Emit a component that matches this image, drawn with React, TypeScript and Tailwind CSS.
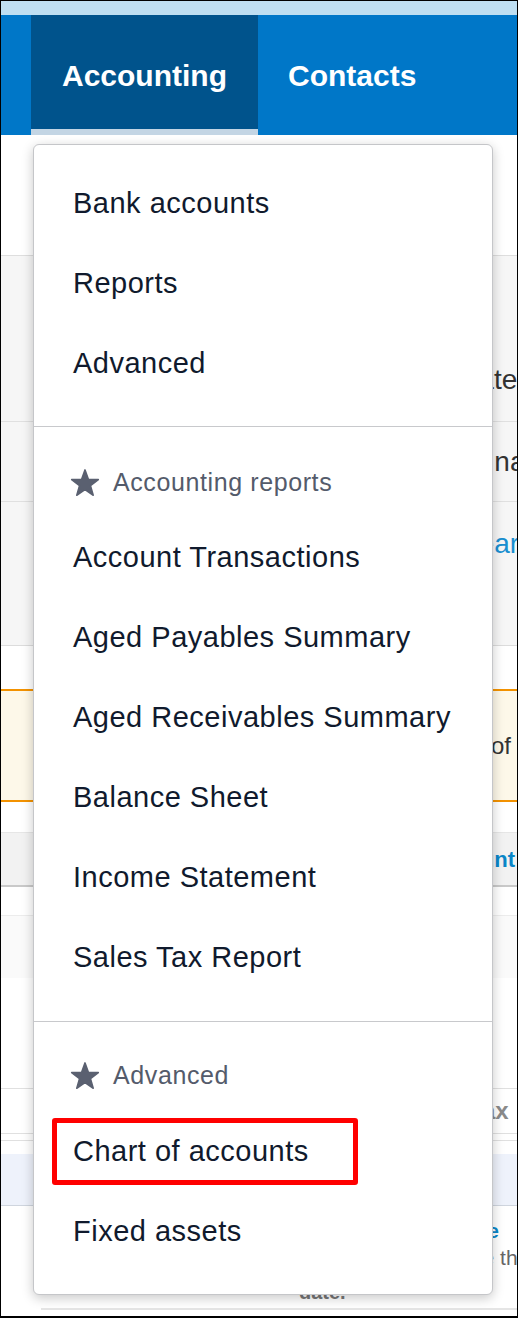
import React from "react";

const font = { fontFamily: '"Liberation Sans", Arial, Helvetica, sans-serif' };

const quickLinks = ["Bank accounts", "Reports", "Advanced"];
const accountingReports = [
  "Account Transactions",
  "Aged Payables Summary",
  "Aged Receivables Summary",
  "Balance Sheet",
  "Income Statement",
  "Sales Tax Report",
];

function Star() {
  return (
    <svg width="30" height="29" viewBox="-1 -1 32 31" className="shrink-0">
      <path
        d="M15 1 L18.64 10.98 L29.27 11.36 L20.9 17.92 L23.82 28.14 L15 22.2 L6.18 28.14 L9.1 17.92 L0.73 11.36 L11.36 10.98 Z"
        fill="#5a6070"
        stroke="#5a6070"
        strokeWidth="1.6"
        strokeLinejoin="round"
      />
    </svg>
  );
}

function MenuItem({ label, highlighted }: { label: string; highlighted?: boolean }) {
  return (
    <div className="relative flex h-[80px] items-center pl-[39px] text-[29px] leading-[30px] tracking-[0.5px] text-[#101a2d]">
      {label}
      {highlighted && (
        <div className="absolute left-[18px] top-[7px] h-[67px] w-[306px] rounded-[3px] border-[5px] border-[#ff0000]" />
      )}
    </div>
  );
}

function SectionHeader({ label }: { label: string }) {
  return (
    <div className="flex h-[30px] items-center gap-[13px] pl-[36px] text-[25px] leading-[30px] tracking-[0.6px] text-[#545b6b]">
      <Star />
      <span>{label}</span>
    </div>
  );
}

export default function App() {
  return (
    <div
      className="relative h-[1318px] w-[518px] overflow-hidden border-x border-t border-b-2 border-black bg-white"
      style={font}
    >
      {/* top strip + nav */}
      <div className="h-[14px] bg-[#bfdff2]" />
      <nav className="flex h-[120px] bg-[#0077c8] pl-[30px] text-[30px] font-bold leading-[30px] text-white">
        <div className="flex w-[227px] flex-col bg-[#00538c]">
          <div className="flex flex-1 justify-center pt-[46px]">Accounting</div>
          <div className="h-[6px] bg-[#c3d5e4]" />
        </div>
        <div className="px-[30px] pt-[46px]">Contacts</div>
      </nav>

      {/* page content behind the menu */}
      <main className="whitespace-nowrap text-[#333]">
        <div className="h-[120px]" />
        <section className="border-t border-[#dedede] bg-[#f6f6f6] text-[28px] leading-[30px]">
          <div className="flex h-[166px] items-end border-b border-[#e0e0e0] pb-[26px] pl-[426px]">Update</div>
          <div className="flex h-[80px] items-center border-b border-[#e0e0e0] pl-[470px]">Finance</div>
          <div className="h-[144px] border-b border-[#dcdcdc] pl-[462px] pt-[27px] text-[#1a8fd0]">Learn more</div>
        </section>
        <div className="h-[43px]" />
        <div className="flex h-[113px] items-center border-y-2 border-[#f39200] bg-[#fdf8e9] pl-[490px] text-[24px]">
          of all
        </div>
        <div className="h-[30px]" />
        <div className="flex h-[55px] items-center border-t border-b-2 border-[#e6e6e6] border-b-[#c9c9c9] bg-[#f2f2f2] pl-[426px] text-[22px] font-bold text-[#0a86c8]">
          Account
        </div>
        <div className="h-[28px]" />
        <div className="h-[63px] border-t border-[#ececec] bg-[#fafafa]" />
        <div className="h-[110px]" />
        <div className="flex h-[46px] items-center border-y border-[#e0e0e0] pl-[468px] text-[24px] font-bold text-[#8a8a8a]">
          Tax
        </div>
        <div className="h-[7px] border-b border-[#e0e0e0]" />
        <div className="h-[13px]" />
        <div className="h-[52px] border-b border-[#cfd5de] bg-[#eef2fb]" />
        <div className="pl-[430px] pt-[12px] text-[20px] font-bold leading-[26px] text-[#0a86c8]">Update</div>
        <div className="pl-[429px] text-[21px] leading-[28px] text-[#666]">update the</div>
        <div className="pl-[298px] pt-[6px] text-[20px] font-bold leading-[28px] text-[#777]">date.</div>
        <div className="ml-[40px] mt-[2px] h-[2px] bg-[#e5e5e5]" />
      </main>

      {/* Accounting dropdown */}
      <div className="absolute left-[32px] top-[143px] w-[460px] rounded-[6px] border border-[#c5c6c9] bg-white shadow-[0_3px_12px_rgba(0,0,0,0.22)]">
        <div className="pb-[23px] pt-[18px]">
          {quickLinks.map((l) => (
            <MenuItem key={l} label={l} />
          ))}
        </div>
        <div className="h-px bg-[#c8c9cc]" />
        <div className="pb-[24px] pt-[40px]">
          <SectionHeader label="Accounting reports" />
          <div className="h-[20px]" />
          {accountingReports.map((l) => (
            <MenuItem key={l} label={l} />
          ))}
        </div>
        <div className="h-px bg-[#c8c9cc]" />
        <div className="pb-[23px] pt-[38px]">
          <SectionHeader label="Advanced" />
          <div className="h-[21px]" />
          <MenuItem label="Chart of accounts" highlighted />
          <MenuItem label="Fixed assets" />
        </div>
      </div>
    </div>
  );
}
